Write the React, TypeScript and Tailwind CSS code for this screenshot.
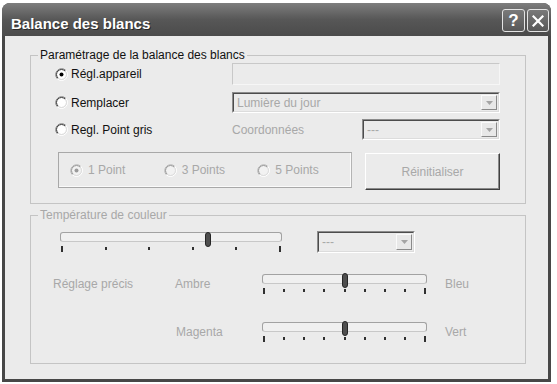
import React from 'react';

const Radio: React.FC<{ checked?: boolean; disabled?: boolean }> = ({ checked, disabled }) => (
  <svg width="13" height="13" viewBox="0 0 13 13" className="shrink-0">
    <circle cx="6.5" cy="6.5" r="4.5" fill={disabled ? '#f2f2f2' : '#ffffff'} />
    <circle cx="6.5" cy="6.5" r="6" fill="none" stroke="#ffffff" />
    <path d="M2.26 10.74 A6 6 0 0 1 10.74 2.26" fill="none" stroke={disabled ? '#b4b4b4' : '#808080'} />
    <circle cx="6.5" cy="6.5" r="5" fill="none" stroke="#dcdcdc" />
    <path d="M2.96 10.04 A5 5 0 0 1 10.04 2.96" fill="none" stroke={disabled ? '#9c9c9c' : '#404040'} />
    {checked && <circle cx="6.5" cy="6.5" r="2" fill={disabled ? '#9a9a9a' : '#000000'} />}
  </svg>
);

const ArrowBtn = () => (
  <div className="flex w-[16px] items-center justify-center border border-t-[#fafafa] border-l-[#fafafa] border-r-[#8a8a8a] border-b-[#8a8a8a] bg-[#e8e8e8]">
    <svg width="7" height="4" viewBox="0 0 7 4">
      <path d="M0 0h7L3.5 4z" fill="#a4a4a4" />
    </svg>
  </div>
);

const Combo: React.FC<{ text: string; className: string }> = ({ text, className }) => (
  <div className={`flex border border-t-[#8c8c8c] border-l-[#8c8c8c] border-r-white border-b-white ${className}`}>
    <div className="flex flex-1 border border-t-[#4c4c4c] border-l-[#4c4c4c] border-r-[#dcdcdc] border-b-[#dcdcdc] bg-[#ebebeb] p-[1px]">
      <span className="flex flex-1 items-center pl-[2px] text-[#a8a8a8]">{text}</span>
      <ArrowBtn />
    </div>
  </div>
);

const Slider: React.FC<{ width: string; thumb: string; ticks: number }> = ({ width, thumb, ticks }) => (
  <div className={`relative h-[21px] shrink-0 ${width}`}>
    <div className="mt-[1px] h-[10px] rounded-[3px] border border-[#a2a2a2] border-b-[#c8c8c8] bg-[#f0f0f0]" />
    <div className="mt-[4px] flex items-start justify-between px-[1px]">
      {Array.from({ length: ticks }).map((_, i) => (
        <span
          key={i}
          className={`w-[2px] bg-[#303030] ${i === 0 || i === ticks - 1 ? 'h-[6px]' : 'mt-[1px] h-[3px]'}`}
        />
      ))}
    </div>
    <div className={`absolute top-0 h-[15px] w-[6px] rounded-[3px] border border-[#262626] bg-[#4e4e4e] ${thumb}`} />
  </div>
);

export default function App() {
  return (
    <div className="h-[384px] w-[557px] bg-white pl-[2px] pt-[3px] font-['Liberation_Sans',Arial,sans-serif] text-[12px] leading-[14px] text-[#111]">
      <div className="flex h-[379px] w-[549px] flex-col rounded-t-[8px] bg-[#474747]">
        {/* title bar */}
        <div className="flex h-[33px] items-start rounded-t-[8px] bg-gradient-to-b from-[#7e7e7e] via-[#575757] to-[#4b4b4b] pl-[9px] pr-[2px]">
          <span className="pt-[12px] text-[15px] font-bold leading-[17px] text-white [text-shadow:1px_1px_0_#2a2a2a]">
            Balance des blancs
          </span>
          <div className="ml-auto mt-[6px] flex gap-[2px]">
            <div className="flex h-[23px] w-[23px] items-center justify-center rounded-[3px] border border-[#e4e4e4] bg-gradient-to-b from-[#7a7a7a] to-[#585858] text-[17px] font-bold leading-[17px] text-white">
              ?
            </div>
            <div className="flex h-[23px] w-[22px] items-center justify-center rounded-[3px] border border-[#e4e4e4] bg-gradient-to-b from-[#7a7a7a] to-[#585858]">
              <svg width="12" height="12" viewBox="0 0 12 12">
                <path d="M1.5 1.5l9 9M10.5 1.5l-9 9" stroke="#ffffff" strokeWidth="2.2" strokeLinecap="square" />
              </svg>
            </div>
          </div>
        </div>

        {/* body */}
        <div className="mx-[3px] mb-[3px] flex-1 bg-[#ebebeb] pl-[25px] pt-[12px]">
          <fieldset className="h-[156px] w-[496px] border border-[#c4c4c4] p-0">
            <legend className="ml-[7px] px-[2px]">Paramétrage de la balance des blancs</legend>

            <div className="mt-[1px] flex h-[22px] items-center">
              <div className="flex w-[201px] items-center gap-[3px] pl-[24px]">
                <Radio checked />
                <span>Régl.appareil</span>
              </div>
              <div className="h-[22px] w-[268px] border border-t-[#c8c8c8] border-l-[#c8c8c8] border-r-[#f6f6f6] border-b-[#f6f6f6] bg-[#ebebeb]" />
            </div>

            <div className="mt-[7px] flex h-[21px] items-center">
              <div className="flex w-[201px] items-center gap-[3px] pl-[24px]">
                <Radio />
                <span>Remplacer</span>
              </div>
              <Combo text="Lumière du jour" className="h-[21px] w-[268px]" />
            </div>

            <div className="mt-[6px] flex h-[21px] items-center">
              <div className="flex w-[201px] items-center gap-[3px] pl-[24px]">
                <Radio />
                <span>Regl. Point gris</span>
              </div>
              <span className="w-[130px] text-[#a8a8a8]">Coordonnées</span>
              <Combo text="---" className="h-[21px] w-[138px]" />
            </div>

            <div className="mt-[12px] flex items-start">
              <div className="ml-[27px] flex h-[36px] w-[294px] items-center border border-[#a8a8a8] border-r-[#b4b4b4] pl-[11px] shadow-[inset_-1px_-1px_0_#fafafa]">
                {['1 Point', '3 Points', '5 Points'].map((t, i) => (
                  <div key={t} className="flex w-[95px] items-center gap-[5px]">
                    <Radio checked={i === 0} disabled />
                    <span className="text-[#a8a8a8]">{t}</span>
                  </div>
                ))}
              </div>
              <div className="ml-[13px] mt-[1px] flex h-[37px] w-[135px] items-center justify-center border border-t-white border-l-white border-r-[#404040] border-b-[#404040] bg-[#ebebeb] text-[#a8a8a8] shadow-[inset_-1px_-1px_0_#8a8a8a]">
                Réinitialiser
              </div>
            </div>
          </fieldset>

          <fieldset className="mt-[4px] h-[156px] w-[496px] border border-[#c4c4c4] p-0">
            <legend className="ml-[7px] px-[2px] text-[#a8a8a8]">Température de couleur</legend>

            <div className="mt-[9px] flex items-start">
              <div className="ml-[29px]">
                <Slider width="w-[222px]" thumb="left-[145px]" ticks={6} />
              </div>
              <Combo text="---" className="ml-[35px] h-[22px] w-[98px]" />
            </div>

            <div className="mt-[20px] flex items-center text-[#a8a8a8]">
              <span className="ml-[22px] w-[122px]">Réglage précis</span>
              <span className="w-[87px]">Ambre</span>
              <Slider width="w-[165px]" thumb="left-[80px]" ticks={9} />
              <span className="ml-[18px]">Bleu</span>
            </div>

            <div className="mt-[27px] flex items-center text-[#a8a8a8]">
              <span className="ml-[145px] w-[86px]">Magenta</span>
              <Slider width="w-[165px]" thumb="left-[80px]" ticks={9} />
              <span className="ml-[18px]">Vert</span>
            </div>
          </fieldset>
        </div>
      </div>
    </div>
  );
}
